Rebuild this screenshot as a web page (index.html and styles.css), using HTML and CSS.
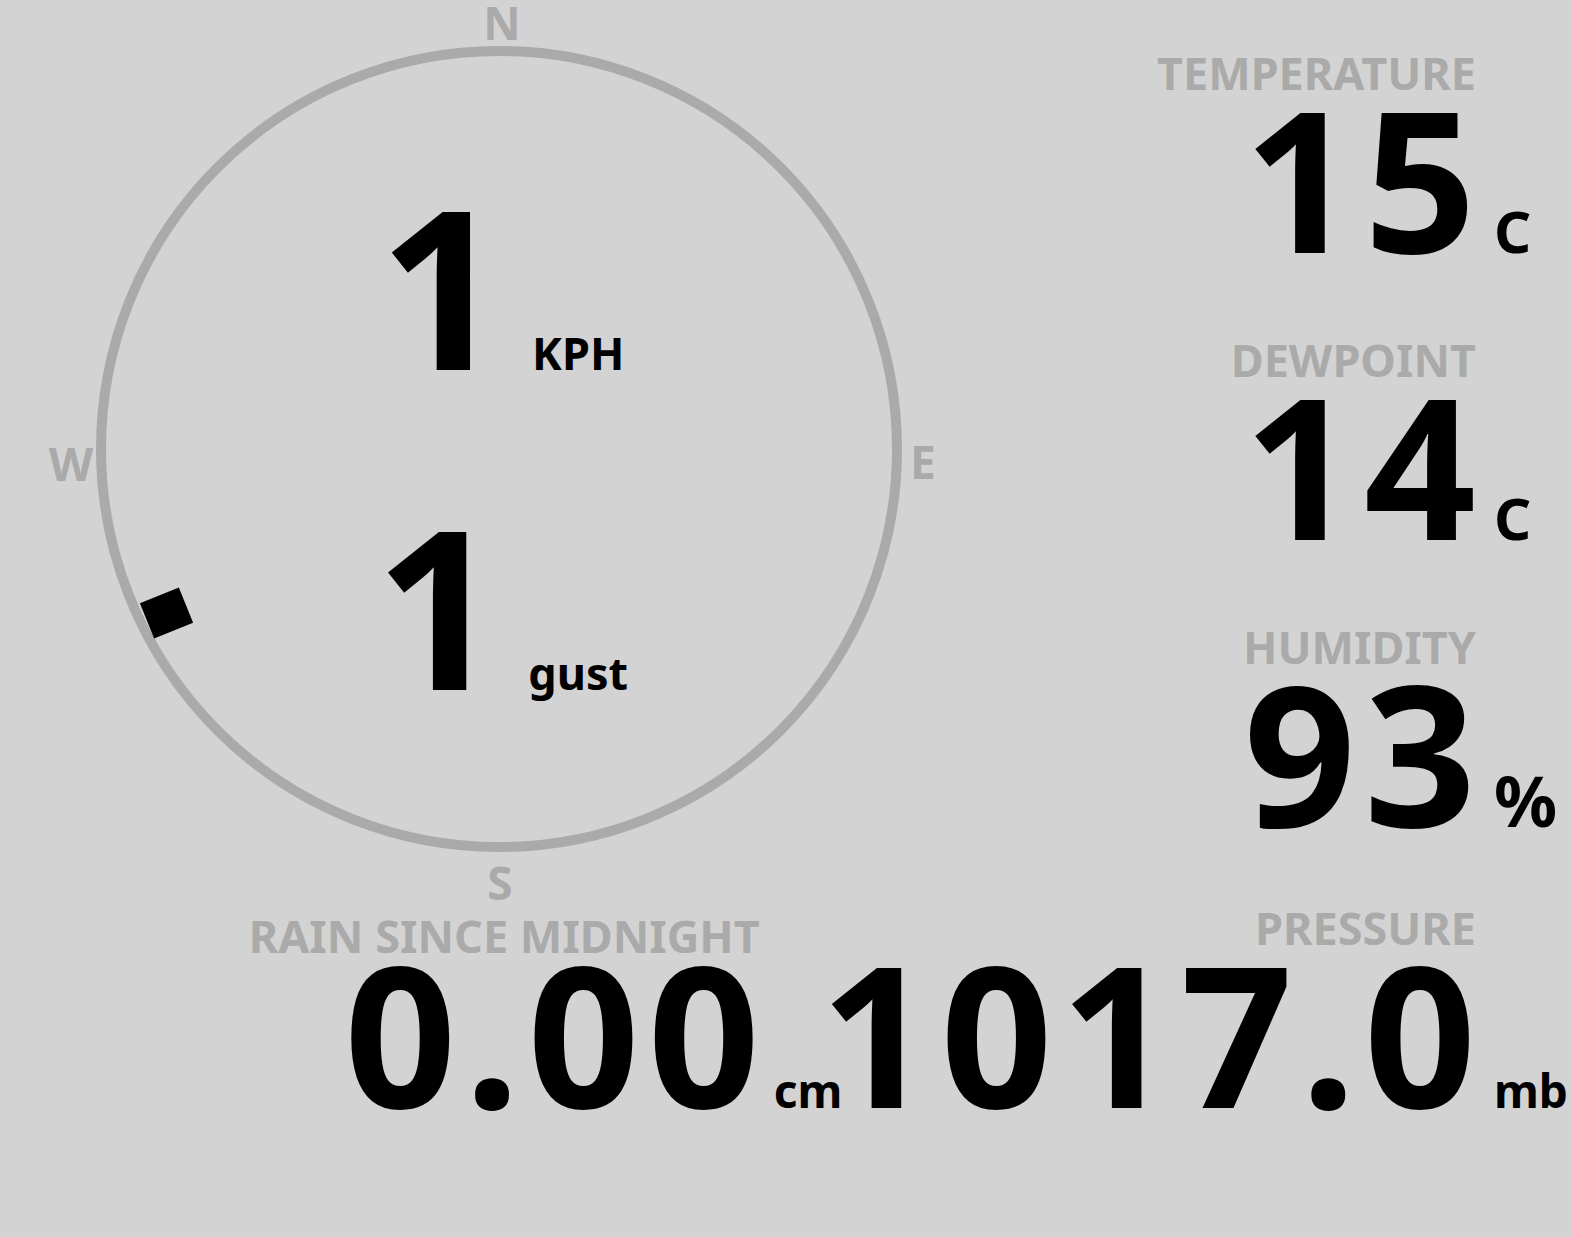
FILE: index.html
```html
<!DOCTYPE html>
<html lang="en">
<head>
    <meta charset="UTF-8">
    <title>Weather Station</title>
    <link rel="stylesheet" href="styles.css">
</head>
<body>
    <div class="station">
        <div class="top">
            <div class="compass">
                <svg class="dial" width="940" height="902" viewBox="0 0 940 902">
                    <circle cx="499" cy="449" r="398" fill="none" stroke="#aaa" stroke-width="10"/>
                    <g class="points" fill="#aaa" text-anchor="middle">
                        <text x="502" y="40">N</text>
                        <text x="923" y="479">E</text>
                        <text x="500" y="900">S</text>
                        <text x="71" y="481">W</text>
                    </g>
                    <rect x="-21" y="-19" width="42" height="38" fill="#000" transform="translate(166.5 613) rotate(-22)"/>
                </svg>
                <div class="wind">
                    <div class="wind-row">
                        <span class="wind-value">1</span>
                        <span class="wind-unit">KPH</span>
                    </div>
                    <div class="wind-row">
                        <span class="wind-value">1</span>
                        <span class="wind-unit">gust</span>
                    </div>
                </div>
            </div>

            <div class="readings">
                <div class="reading">
                    <div class="label">TEMPERATURE</div>
                    <div class="value">15</div>
                    <div class="unit big">C</div>
                </div>
                <div class="reading">
                    <div class="label">DEWPOINT</div>
                    <div class="value">14</div>
                    <div class="unit big">C</div>
                </div>
                <div class="reading">
                    <div class="label">HUMIDITY</div>
                    <div class="value">93</div>
                    <div class="unit big pct">%</div>
                </div>
            </div>
        </div>

        <div class="bottom">
            <div class="reading rain">
                <div class="label">RAIN SINCE MIDNIGHT</div>
                <div class="value">0.00</div>
                <div class="unit">cm</div>
            </div>
            <div class="reading">
                <div class="label">PRESSURE</div>
                <div class="value">1017.0</div>
                <div class="unit">mb</div>
            </div>
        </div>
    </div>
</body>
</html>
```

FILE: styles.css
```css
body {
    margin: 0;
    background-color: #d3d3d3;
    font-family: 'Noto Sans', 'Open Sans', sans-serif;
    font-weight: 700;
    color: #000;
}

.station {
    width: 1571px;
}

.top {
    display: flex;
}

/* ---- compass ---- */
.compass {
    position: relative;
    width: 940px;
    height: 902px;
    flex: none;
}

.dial {
    position: absolute;
    left: 0;
    top: 0;
}

.points text {
    font-family: 'Noto Sans', sans-serif;
    font-weight: 700;
    font-size: 46px;
}

.wind {
    position: relative;
    display: flex;
    flex-direction: column;
    align-items: center;
    gap: 99px;
    padding-top: 174px;
    padding-left: 63px;
}

.wind-row {
    display: flex;
    align-items: baseline;
    gap: 27px;
}

.wind-value {
    font-size: 221px;
    line-height: 1;
}

.wind-unit {
    font-size: 45px;
    line-height: 1;
}

/* ---- readings ---- */
.readings {
    flex: 1;
    display: flex;
    flex-direction: column;
    align-items: flex-end;
    gap: 77px;
    padding-top: 50px;
    padding-right: 7px;
}

.reading {
    display: grid;
    grid-template-columns: auto 70px;
    column-gap: 18px;
    row-gap: 2px;
}

.label {
    grid-column: 1;
    text-align: right;
    font-size: 45px;
    line-height: 45px;
    color: #aaa;
}

.value {
    grid-column: 1;
    grid-row: 2;
    text-align: right;
    font-size: 196px;
    line-height: 160px;
    letter-spacing: 8px;
    margin-right: -8px;
    align-self: baseline;
}

.unit {
    grid-column: 2;
    grid-row: 2;
    font-size: 46px;
    line-height: 46px;
    align-self: baseline;
}

.unit.big {
    font-size: 58px;
    line-height: 58px;
}

.unit.pct {
    font-size: 70px;
}

/* ---- bottom row ---- */
.bottom {
    display: flex;
    justify-content: flex-end;
    padding-top: 3px;
    padding-right: 7px;
}

.reading.rain {
    grid-template-columns: auto auto;
    column-gap: 14px;
    margin-right: -22px;
}

.rain .label {
    margin-top: 8px;
    margin-bottom: -8px;
}
```
